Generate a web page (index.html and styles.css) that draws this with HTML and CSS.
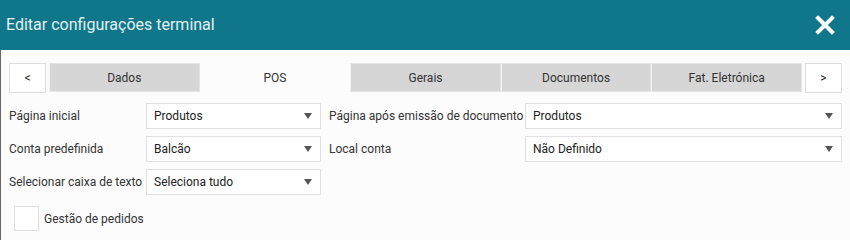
FILE: index.html
```html
<!DOCTYPE html>
<html lang="pt">
<head>
    <meta charset="UTF-8">
    <title>Editar configurações terminal</title>
    <link rel="stylesheet" href="styles.css">
</head>
<body>
    <div class="dialog">
        <div class="dialog-header">
            <h1>Editar configurações terminal</h1>
            <button class="close" type="button" aria-label="Fechar">
                <svg width="20" height="20" viewBox="0 0 20 20">
                    <path d="M3 3 L17 17 M17 3 L3 17" stroke="#fff" stroke-width="4" stroke-linecap="square" fill="none"/>
                </svg>
            </button>
        </div>

        <div class="dialog-body">
            <div class="tabs">
                <button class="tab-nav" type="button">&lt;</button>
                <div class="tab-list">
                    <div class="tab">Dados</div>
                    <div class="tab active">POS</div>
                    <div class="tab">Gerais</div>
                    <div class="tab">Documentos</div>
                    <div class="tab">Fat. Eletrónica</div>
                </div>
                <button class="tab-nav" type="button">&gt;</button>
            </div>

            <div class="form-grid">
                <label>Página inicial</label>
                <div class="select">Produtos</div>
                <label>Página após emissão de documento</label>
                <div class="select">Produtos</div>

                <label>Conta predefinida</label>
                <div class="select">Balcão</div>
                <label>Local conta</label>
                <div class="select">Não Definido</div>

                <label>Selecionar caixa de texto</label>
                <div class="select">Seleciona tudo</div>
            </div>

            <div class="check-row">
                <span class="checkbox"></span>
                <span>Gestão de pedidos</span>
            </div>
        </div>
    </div>
</body>
</html>
```

FILE: styles.css
```css
* {
    box-sizing: border-box;
    margin: 0;
    padding: 0;
    font-family: Roboto, 'Liberation Sans', sans-serif;
}

body {
    width: 850px;
    height: 240px;
    overflow: hidden;
    background-color: #fcfcfc;
    color: #333;
    font-size: 12px;
}

.dialog {
    height: 240px;
    border-left: 1px solid #666;
}

.dialog-header {
    height: 50px;
    background-color: #0f7789;
    display: flex;
    align-items: center;
    justify-content: space-between;
    padding: 0 15px 0 6px;
    margin-left: -1px;
}

.dialog-header h1 {
    font-size: 16px;
    font-weight: 400;
    color: #e3eff1;
    padding-bottom: 1px;
}

.close {
    background: none;
    border: none;
    display: flex;
    cursor: pointer;
}

.dialog-body {
    padding: 13px 8px 0 8px;
}

.tabs {
    display: flex;
    align-items: stretch;
    height: 30px;
    margin-bottom: 10px;
}

.tab-nav {
    width: 37px;
    background: #fff;
    border: 1px solid #ddd;
    font-size: 12px;
    color: #222;
    cursor: pointer;
}

.tab-list {
    flex: 1;
    display: grid;
    grid-template-columns: repeat(5, 1fr);
    margin: 0 3px 1px 3px;
}

.tab {
    display: flex;
    align-items: center;
    justify-content: center;
    background-color: #d6d6d6;
    border: 1px solid #e4e4e4;
    border-left: 1px solid #f2f2f2;
    color: #333;
}

.tab.active {
    background: transparent;
    border-color: transparent;
}

.form-grid {
    display: grid;
    grid-template-columns: 129px 175px 188px 1fr;
    column-gap: 8px;
    row-gap: 7px;
    align-items: center;
}

.form-grid label {
    white-space: nowrap;
}

.select {
    height: 26px;
    padding: 0 8px 0 7px;
    border: 1px solid #e0e0e0;
    background: #fff;
    display: flex;
    align-items: center;
    justify-content: space-between;
    font-size: 12px;
    color: #222;
}

.select::after {
    content: "";
    border-left: 4px solid transparent;
    border-right: 4px solid transparent;
    border-top: 6px solid #555;
}

.check-row {
    display: flex;
    align-items: center;
    gap: 5px;
    margin: 11px 0 0 5px;
}

.checkbox {
    width: 25px;
    height: 25px;
    border: 1px solid #ddd;
    background: #fff;
}
```
